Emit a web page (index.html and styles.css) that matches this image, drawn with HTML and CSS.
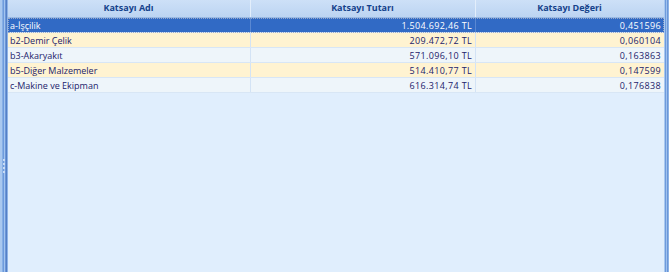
FILE: index.html
```html
<!DOCTYPE html>
<html lang="tr">
<head>
<meta charset="utf-8">
<link rel="stylesheet" href="styles.css">
</head>
<body>
<div class="frame">
  <div class="edge-left"><div class="grip"><i></i><i></i><i></i><i></i></div></div>
  <div class="grid">
    <div class="row head">
      <div class="cell c1">Katsayı Adı</div>
      <div class="cell c2">Katsayı Tutarı</div>
      <div class="cell c3">Katsayı Değeri</div>
    </div>
    <div class="row sel">
      <div class="cell c1">a-İşçilik</div>
      <div class="cell c2 num">1.504.692,46 TL</div>
      <div class="cell c3 num">0,451596</div>
    </div>
    <div class="row odd">
      <div class="cell c1">b2-Demir Çelik</div>
      <div class="cell c2 num">209.472,72 TL</div>
      <div class="cell c3 num">0,060104</div>
    </div>
    <div class="row even">
      <div class="cell c1">b3-Akaryakıt</div>
      <div class="cell c2 num">571.096,10 TL</div>
      <div class="cell c3 num">0,163863</div>
    </div>
    <div class="row odd">
      <div class="cell c1">b5-Diğer Malzemeler</div>
      <div class="cell c2 num">514.410,77 TL</div>
      <div class="cell c3 num">0,147599</div>
    </div>
    <div class="row even">
      <div class="cell c1">c-Makine ve Ekipman</div>
      <div class="cell c2 num">616.314,74 TL</div>
      <div class="cell c3 num">0,176838</div>
    </div>
  </div>
  <div class="edge-right"></div>
</div>
</body>
</html>
```

FILE: styles.css
```css
html, body {
  margin: 0;
  padding: 0;
}
body {
  width: 669px;
  height: 272px;
  overflow: hidden;
  font-family: "Open Sans", "Noto Sans", sans-serif;
  font-size: 9px;
}
.frame {
  display: flex;
  height: 272px;
  background: #e0eefd;
}
.edge-left {
  width: 8px;
  flex: none;
  background: linear-gradient(to right,
    #a9c8ef 0, #a9c8ef 2px,
    #86afe6 2px, #86afe6 3px,
    #6e9bdc 3px, #6e9bdc 4px,
    #a3c4ef 4px, #a3c4ef 5px,
    #6b97d8 5px, #6b97d8 6px,
    #557fc6 6px, #557fc6 7px,
    #8db3e6 7px, #8db3e6 8px);
  display: flex;
  align-items: flex-start;
  justify-content: center;
}
.grip {
  margin-top: 159px;
  display: flex;
  flex-direction: column;
  gap: 2px;
}
.grip i {
  display: block;
  width: 2px;
  height: 2px;
  background: #c9dcf5;
}
.edge-right {
  width: 5px;
  flex: none;
  background: linear-gradient(to right,
    #a9c8ef 0, #a9c8ef 1px,
    #6e9bdc 1px, #6e9bdc 2px,
    #9fc1ee 2px, #9fc1ee 3px,
    #6b97d8 3px, #6b97d8 4px,
    #8db3e6 4px, #8db3e6 5px);
}
.grid {
  flex: 1;
  display: flex;
  flex-direction: column;
}
.row {
  display: grid;
  grid-template-columns: 243px 225px 188px;
  height: 15px;
  box-sizing: border-box;
  border-bottom: 1px solid #d8e6f5;
}
.cell {
  padding: 0 3px 0 2px;
  line-height: 15px;
  color: #22226a;
  white-space: nowrap;
  overflow: hidden;
  border-right: 1px solid #d3e3f5;
}
.cell.c3 { border-right: none; }
.num {
  text-align: right;
  letter-spacing: 0.35px;
}
.head {
  height: 18px;
  border-bottom: 1px solid #9ab9e3;
  background: linear-gradient(to bottom, #cde0f7 0%, #bcd4f2 100%);
}
.head .cell {
  line-height: 15px;
  text-align: center;
  font-weight: 700;
  color: #15428b;
  border-right: 1px solid #e3eefb;
}
.head .cell.c3 { border-right: none; }
.sel {
  background: #316ac5;
  outline: 1px dotted #9aa9c8;
  outline-offset: -1px;
}
.sel .cell {
  color: #ffffff;
  border-right-color: #5a88d2;
}
.odd { background: #fff3d1; }
.even { background: #eef5fa; }
```
